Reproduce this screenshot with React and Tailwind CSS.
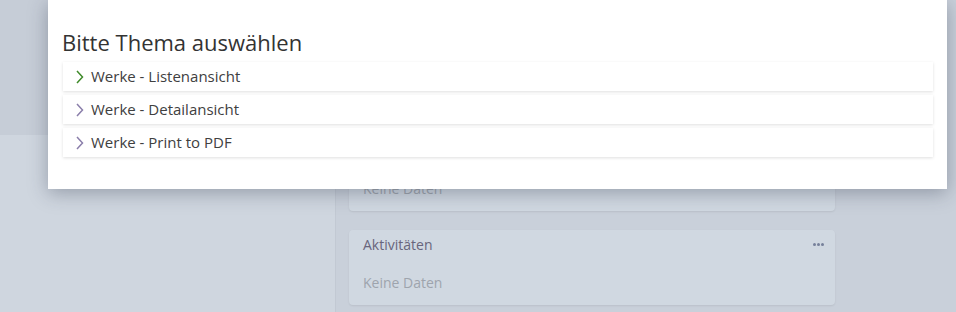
import React from 'react';

const themes = [
  { label: 'Werke - Listenansicht', active: true },
  { label: 'Werke - Detailansicht', active: false },
  { label: 'Werke - Print to PDF', active: false },
];

function Chevron({ active }) {
  return (
    <svg width="10" height="14" viewBox="0 0 10 14" className="shrink-0">
      <path
        d="M2 1 L7.5 7 L2 13"
        fill="none"
        stroke={active ? '#3f8a2a' : '#8a7eaa'}
        strokeWidth="1.5"
      />
    </svg>
  );
}

function Card({ title }) {
  return (
    <div className="bg-[#d0d8e1] rounded-sm shadow-[0_1px_2px_rgba(0,0,0,0.08)] h-[75px] flex flex-col">
      <div className="h-[28px] pl-[14px] pr-[11px] flex items-center justify-between">
        <span className="text-[14px] text-[#68657c]">{title}</span>
        <span className="flex gap-[1px]">
          <span className="w-[3px] h-[3px] rounded-full bg-[#76809a]" />
          <span className="w-[3px] h-[3px] rounded-full bg-[#76809a]" />
          <span className="w-[3px] h-[3px] rounded-full bg-[#76809a]" />
        </span>
      </div>
      <div className="px-[14px] pt-[14px] text-[14px] text-[#9ea4ad]">Keine Daten</div>
    </div>
  );
}

export default function App() {
  return (
    <div
      className="relative w-[956px] h-[312px] overflow-hidden flex bg-[#c9d0da]"
      style={{ fontFamily: '"Open Sans", "Noto Sans", sans-serif' }}
    >
      {/* sidebar */}
      <div className="w-[335px] flex flex-col">
        <div className="h-[135px] bg-[#c6cdd7]" />
        <div className="flex-1 bg-[#cfd6df]" />
      </div>
      <div className="w-px bg-[#c2c9d3]" />

      {/* main column */}
      <div className="w-[512px] px-[13px] pt-[136px] flex flex-col gap-[19px] bg-[#c9d0da]">
        <Card title="Dokumente" />
        <Card title="Aktivitäten" />
      </div>

      {/* modal */}
      <div className="absolute left-[48px] top-0 w-[899px] h-[189px] bg-white shadow-[0_4px_18px_rgba(40,50,70,0.35)] px-[14px] pt-[27px]">
        <h2 className="text-[22px] leading-[30px] text-[#333333] mb-[5px]">Bitte Thema auswählen</h2>
        <div className="flex flex-col gap-[4px] pl-[1px]">
          {themes.map(t => (
            <div
              key={t.label}
              className="h-[29px] bg-white flex items-center gap-[6px] px-[12px] shadow-[0_1px_3px_rgba(0,0,0,0.13)]"
            >
              <Chevron active={t.active} />
              <span className="text-[15px] text-[#404040]">{t.label}</span>
            </div>
          ))}
        </div>
      </div>
    </div>
  );
}
